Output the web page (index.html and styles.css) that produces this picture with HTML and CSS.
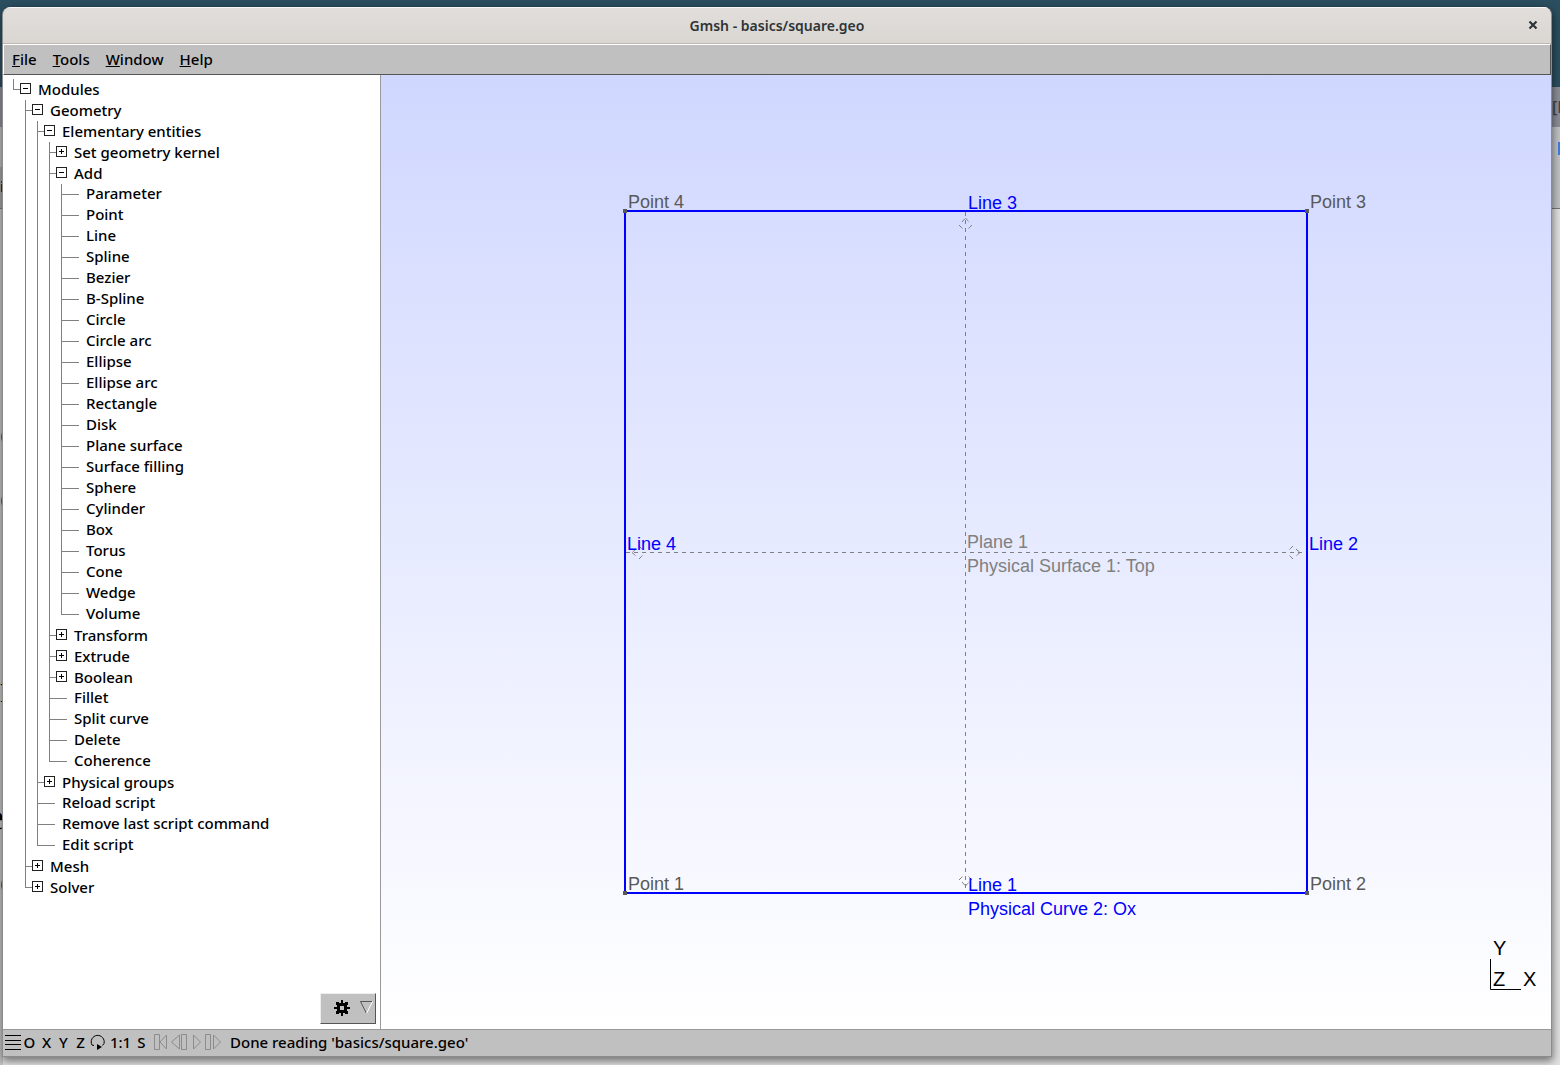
FILE: index.html
```html
<!DOCTYPE html>
<html lang="en">
<head>
<meta charset="utf-8">
<title>Gmsh - basics/square.geo</title>
<link rel="stylesheet" href="styles.css">
</head>
<body>
<div class="desktop" aria-hidden="true">
  <div class="desk-wall"></div>
  <div class="desk-title"><span>[F</span></div>
  <div class="desk-tools"><span>i</span><i class="desk-chip"></i></div>
  <div class="desk-page"><span>c</span><span>c</span><span>.</span><span>.</span><span>r</span><span>.</span><span class="back">e</span><span>o</span></div>
</div>

<main class="window">
  <header class="titlebar">
    <h1>Gmsh - basics/square.geo</h1>
    <button class="close" type="button" aria-label="Close"><svg width="10" height="10" viewBox="0 0 10 10"><path d="M1.500 1.500L8.500 8.500M8.500 1.500L1.500 8.500" stroke="#2e3436" stroke-width="2.200"/></svg></button>
  </header>

  <nav class="menubar">
    <button type="button"><u>F</u>ile</button>
    <button type="button"><u>T</u>ools</button>
    <button type="button"><u>W</u>indow</button>
    <button type="button"><u>H</u>elp</button>
  </nav>

  <div class="content">
    <aside class="sidebar">
      <ul class="tree">
        <li><button class="node open" type="button">Modules</button>
          <ul>
            <li><button class="node open" type="button">Geometry</button>
              <ul>
                <li><button class="node open" type="button">Elementary entities</button>
                  <ul>
                    <li><button class="node closed" type="button">Set geometry kernel</button></li>
                    <li><button class="node open" type="button">Add</button>
                      <ul>
                        <li><button class="leaf" type="button">Parameter</button></li>
                        <li><button class="leaf" type="button">Point</button></li>
                        <li><button class="leaf" type="button">Line</button></li>
                        <li><button class="leaf" type="button">Spline</button></li>
                        <li><button class="leaf" type="button">Bezier</button></li>
                        <li><button class="leaf" type="button">B-Spline</button></li>
                        <li><button class="leaf" type="button">Circle</button></li>
                        <li><button class="leaf" type="button">Circle arc</button></li>
                        <li><button class="leaf" type="button">Ellipse</button></li>
                        <li><button class="leaf" type="button">Ellipse arc</button></li>
                        <li><button class="leaf" type="button">Rectangle</button></li>
                        <li><button class="leaf" type="button">Disk</button></li>
                        <li><button class="leaf" type="button">Plane surface</button></li>
                        <li><button class="leaf" type="button">Surface filling</button></li>
                        <li><button class="leaf" type="button">Sphere</button></li>
                        <li><button class="leaf" type="button">Cylinder</button></li>
                        <li><button class="leaf" type="button">Box</button></li>
                        <li><button class="leaf" type="button">Torus</button></li>
                        <li><button class="leaf" type="button">Cone</button></li>
                        <li><button class="leaf" type="button">Wedge</button></li>
                        <li><button class="leaf" type="button">Volume</button></li>
                      </ul>
                    </li>
                    <li><button class="node closed" type="button">Transform</button></li>
                    <li><button class="node closed" type="button">Extrude</button></li>
                    <li><button class="node closed" type="button">Boolean</button></li>
                    <li><button class="leaf" type="button">Fillet</button></li>
                    <li><button class="leaf" type="button">Split curve</button></li>
                    <li><button class="leaf" type="button">Delete</button></li>
                    <li><button class="leaf" type="button">Coherence</button></li>
                  </ul>
                </li>
                <li><button class="node closed" type="button">Physical groups</button></li>
                <li><button class="leaf" type="button">Reload script</button></li>
                <li><button class="leaf" type="button">Remove last script command</button></li>
                <li><button class="leaf" type="button">Edit script</button></li>
              </ul>
            </li>
            <li><button class="node closed" type="button">Mesh</button></li>
            <li><button class="node closed" type="button">Solver</button></li>
          </ul>
        </li>
      </ul>
      <button class="options" type="button" aria-label="Options">
        <svg width="16" height="16" viewBox="0 0 16 16" shape-rendering="crispEdges"><path d="M7 0h2v3h2V2h3v3h-1v2h3v2h-3v2h1v3h-3v-1H9v3H7v-3H5v1H2v-3h1V9H0V7h3V5H2V2h3v1h2zM6 6v4h4V6z" fill-rule="evenodd"/></svg>
        <svg width="13" height="13" viewBox="0 0 13 13" fill="none"><path d="M6.500 12.500L.500 .500H12" stroke="#555"/><path d="M12.500 .500L6.500 12.500" stroke="#fff"/></svg>
      </button>
    </aside>

    <section class="view">
      <svg class="scene" viewBox="0 0 1170 954" role="img" aria-label="Square geometry">
        <g class="guides">
          <path d="M584.500 137V818M245 477.500H925"/>
        </g>
        <g class="arrows">
          <path d="M581 147l3.500-4 3.500 4M578 150l4 4M591 150l-4 4"/>
          <path d="M581 807l3.500 4 3.500-4M578 805l4-4M591 805l-4-4"/>
          <path d="M255 474l-4 3.500 4 3.500M258 471l4 4M258 484l4-4"/>
          <path d="M915 474l4 3.500-4 3.500M912 471l-4 4M912 484l-4-4"/>
        </g>
        <rect class="edge" x="244" y="136" width="682" height="682"/>
        <g class="vertex">
          <path d="M242 134h4v4h-4zM924 134h4v4h-4zM242 816h4v4h-4zM924 816h4v4h-4z"/>
        </g>
        <g class="t-point">
          <text x="247" y="133">Point 4</text>
          <text x="929" y="133">Point 3</text>
          <text x="247" y="815">Point 1</text>
          <text x="929" y="815">Point 2</text>
        </g>
        <g class="t-line">
          <text x="587" y="134">Line 3</text>
          <text x="246" y="475">Line 4</text>
          <text x="928" y="475">Line 2</text>
          <text x="587" y="816">Line 1</text>
          <text x="587" y="840">Physical Curve 2: Ox</text>
        </g>
        <g class="t-surface">
          <text x="586" y="473">Plane 1</text>
          <text x="586" y="497">Physical Surface 1: Top</text>
        </g>
      </svg>
      <svg class="axes" width="64" height="96" viewBox="0 0 64 96" role="img" aria-label="Axes">
        <path d="M3.500 26V56.500H34" fill="none" stroke="#000"/>
        <text x="6" y="22">Y</text><text x="6" y="53">Z</text><text x="36" y="53">X</text>
      </svg>
    </section>
  </div>

  <footer class="statusbar">
    <button type="button" aria-label="Menu"><svg width="17" height="16" viewBox="0 0 17 16"><path d="M1 1.500h16M1 6.500h16M1 10.500h16M1 15.500h16" stroke="#000"/></svg></button>
    <button type="button">O</button>
    <button type="button">X</button>
    <button type="button">Y</button>
    <button type="button">Z</button>
    <button type="button" aria-label="Rotate"><svg width="17" height="16" viewBox="0 0 17 16"><path d="M5 11.500L3 11A6.500 6.500 0 1 1 15 9.500L13.500 11.500" fill="none" stroke="#000"/><path d="M8 10l5 3-5 3z"/></svg></button>
    <button class="wide" type="button">1:1</button>
    <button class="slim" type="button">S</button>
    <div class="player">
      <button type="button" aria-label="Rewind" disabled><svg width="17" height="16" viewBox="0 0 17 16"><path d="M1.500 .500h5v15h-5zM13.500 1v14L7 8z"/></svg></button>
      <button type="button" aria-label="Step back" disabled><svg width="17" height="16" viewBox="0 0 17 16"><path d="M9.500 1v14L1.500 8zM11.500 .500h5v15h-5z"/></svg></button>
      <button type="button" aria-label="Play" disabled><svg width="17" height="16" viewBox="0 0 17 16"><path d="M6.500 1v14L13.500 8z"/></svg></button>
      <button type="button" aria-label="Step forward" disabled><svg width="17" height="16" viewBox="0 0 17 16"><path d="M1.500 .500h5v15h-5zM9.500 1v14L16.500 8z"/></svg></button>
    </div>
    <output>Done reading 'basics/square.geo'</output>
  </footer>
</main>
</body>
</html>
```
FILE: styles.css
```css
*,
*::before {
  box-sizing: border-box;
}

body {
  margin: 0;
  height: 100vh;
  overflow: hidden;
  display: flex;
  font: 500 15px/21px "Noto Sans", "Open Sans", sans-serif;
  color: #000;
}

button {
  padding: 0;
  border: 0;
  background: none;
  font: inherit;
  color: inherit;
}

svg {
  display: block;
}

/* windows behind the main one */
.desktop {
  position: absolute;
  inset: 0;
  z-index: -1;
  display: flex;
  flex-direction: column;
  background: #e2e2e2;
}

.desk-wall {
  height: 87px;
  background: #2b4f60;
}

.desk-title {
  height: 40px;
  background: #8c8e9a;
  display: flex;
  justify-content: flex-end;
  align-items: center;
  font-size: 16px;
  color: #444;
}

.desk-title span {
  width: 8px;
  white-space: nowrap;
}

.desk-tools {
  height: 82px;
  background: linear-gradient(#bcbcbc 40px, #a2a3a9 40px) 0 0 / 50% 100% no-repeat #c2c3c8;
  border-bottom: 1px solid #777;
  display: flex;
  justify-content: space-between;
  padding-top: 15px;
}

.desk-tools span {
  padding-top: 34px;
}

.desk-chip {
  width: 2px;
  height: 13px;
  background: #3f7fe0;
}

.desk-page {
  flex: 1;
  width: 3px;
  background: #c4c4c4;
  padding-top: 192px;
  display: flex;
  flex-direction: column;
  align-items: flex-start;
  font: 38px/64px "Liberation Serif", serif;
}

.desk-page .back {
  margin-left: -13px;
}

.window {
  flex: 1;
  margin: 7px 8px 8px 3px;
  display: flex;
  flex-direction: column;
  border-right: 1px solid #8c8c8c;
  border-bottom: 1px solid #8c8c8c;
  border-radius: 8px 8px 0 0;
  background: #c0c0c0;
  overflow: hidden;
  box-shadow: -1px 0 #8c8c8c, 0 3px 9px 1px rgba(0, 0, 0, .5);
}

.titlebar {
  height: 37px;
  display: grid;
  grid-template-columns: 1fr auto 1fr;
  align-items: center;
  padding-bottom: 1px;
  background: linear-gradient(#e1dedb, #dad6d2);
  border-top: 1px solid #f8f7f6;
  border-bottom: 1px solid #bfb8b1;
}

.titlebar h1 {
  grid-column: 2;
  margin: 0;
  font-size: 14px;
  font-weight: 600;
  color: #2e3436;
}

.close {
  justify-self: end;
  margin-right: 13px;
}

.menubar {
  height: 31px;
  display: flex;
  border-top: 1px solid #fff;
  border-left: 1px solid #fff;
  border-right: 1px solid #555;
  border-bottom: 1px solid #555;
}

.menubar button {
  padding: 0 8px;
}

.menubar u {
  text-decoration-thickness: 1px;
  text-underline-offset: 1px;
}

.content {
  flex: 1;
  min-height: 0;
  display: flex;
}

.sidebar {
  width: 378px;
  display: flex;
  flex-direction: column;
  justify-content: space-between;
  padding: 4px 4px 5px 10px;
  border-right: 1px solid #999;
  background: #fff;
}

.tree,
.tree ul {
  margin: 0;
  padding: 0;
  list-style: none;
}

.tree ul {
  margin-left: 12px;
}

/* vertical guide beside each branch, cut short at the last child */
.tree li {
  background: linear-gradient(#808080, #808080) 0 0 / 1px 100% no-repeat;
}

.tree li:last-child {
  background-size: 1px 11px;
}

.node,
.leaf {
  display: flex;
  height: 21px;
  line-height: 18px;
  white-space: nowrap;
}

.node {
  line-height: 20px;
  background: linear-gradient(#808080, #808080) 0 10px / 7px 1px no-repeat;
}

.leaf {
  padding-left: 25px;
  background: linear-gradient(#808080, #808080) 0 10px / 18px 1px no-repeat;
}

.node::before {
  content: "";
  width: 11px;
  height: 11px;
  margin: 4px 7px 0;
  border: 1px solid #222;
  background: linear-gradient(#000, #000) center / 5px 1px no-repeat;
}

.closed::before {
  background: linear-gradient(#000, #000) center / 5px 1px no-repeat,
    linear-gradient(#000, #000) center / 1px 5px no-repeat;
}

.options {
  align-self: flex-end;
  width: 56px;
  height: 31px;
  display: flex;
  align-items: center;
  justify-content: flex-end;
  gap: 10px;
  padding: 0 2px 2px 0;
  background: #c0c0c0;
  border: 1px solid;
  border-color: #eee #555 #555 #eee;
}

.view {
  position: relative;
  flex: 1;
  min-width: 0;
  background: linear-gradient(#d0d7ff, #fff);
}

.scene {
  width: 100%;
  height: 100%;
}

.scene text,
.axes text {
  font: 18px "Liberation Sans", Arial, sans-serif;
}

.axes text {
  font-size: 20px;
}

.guides {
  stroke: #808080;
  stroke-dasharray: 4 4;
}

.arrows {
  fill: none;
  stroke: #808080;
  stroke-dasharray: 4 1;
}

.edge {
  fill: none;
  stroke: #00f;
  stroke-width: 2;
}

.vertex,
.t-point {
  fill: #595959;
}

.t-line {
  fill: #00f;
}

.t-surface {
  fill: #808080;
}

.axes {
  position: absolute;
  right: 0;
  bottom: 0;
}

.statusbar {
  height: 27px;
  display: flex;
  align-items: center;
  padding: 0 0 2px 1px;
  border-top: 1px solid #999;
}

.statusbar button {
  width: 17px;
}

.statusbar .wide {
  width: 29px;
}

.statusbar .slim {
  width: 13px;
}

.player {
  display: flex;
  margin: 0 9px 0 5px;
}

.player path {
  fill: none;
  stroke: #8c8c8c;
}
```
